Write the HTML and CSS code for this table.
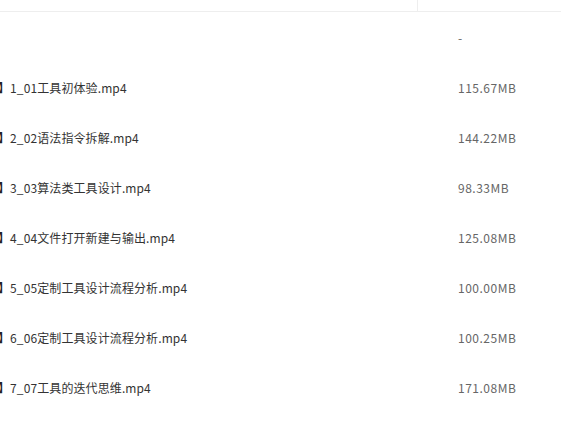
FILE: index.html
```html
<!DOCTYPE html>
<html>
<head>
<meta charset="utf-8">
<link rel="stylesheet" href="styles.css">
</head>
<body>
<div class="table">
  <div class="row head">
    <div class="name"></div>
    <div class="size"></div>
  </div>
  <div class="row">
    <div class="name"></div>
    <div class="size">-</div>
  </div>
  <div class="row">
    <div class="name"><span class="br">】</span>1_01工具初体验.mp4</div>
    <div class="size">115.67MB</div>
  </div>
  <div class="row">
    <div class="name"><span class="br">】</span>2_02语法指令拆解.mp4</div>
    <div class="size">144.22MB</div>
  </div>
  <div class="row">
    <div class="name"><span class="br">】</span>3_03算法类工具设计.mp4</div>
    <div class="size">98.33MB</div>
  </div>
  <div class="row">
    <div class="name"><span class="br">】</span>4_04文件打开新建与输出.mp4</div>
    <div class="size">125.08MB</div>
  </div>
  <div class="row">
    <div class="name"><span class="br">】</span>5_05定制工具设计流程分析.mp4</div>
    <div class="size">100.00MB</div>
  </div>
  <div class="row">
    <div class="name"><span class="br">】</span>6_06定制工具设计流程分析.mp4</div>
    <div class="size">100.25MB</div>
  </div>
  <div class="row">
    <div class="name"><span class="br">】</span>7_07工具的迭代思维.mp4</div>
    <div class="size">171.08MB</div>
  </div>
</div>
</body>
</html>
```

FILE: styles.css
```css
html, body {
  margin: 0;
  padding: 0;
  background: #fff;
  overflow: hidden;
}
body {
  font-family: "Noto Sans CJK SC", "Noto Sans", sans-serif;
  font-size: 12px;
  color: #333;
}
.table {
  width: 561px;
}
.row {
  display: flex;
  height: 50px;
  align-items: center;
}
.row.head {
  height: 11px;
  border-bottom: 1px solid #eeeeee;
}
.name {
  width: 417px;
  flex: none;
  white-space: nowrap;
  display: flex;
  justify-content: flex-start;
  letter-spacing: 0.1px;
}
.head .name {
  height: 11px;
  border-right: 1px solid #eeeeee;
}
.br {
  margin-left: -2px;
  font-weight: bold;
  color: #222;
}
.size {
  padding-left: 41px;
  color: #666;
  letter-spacing: 0.5px;
}
```
